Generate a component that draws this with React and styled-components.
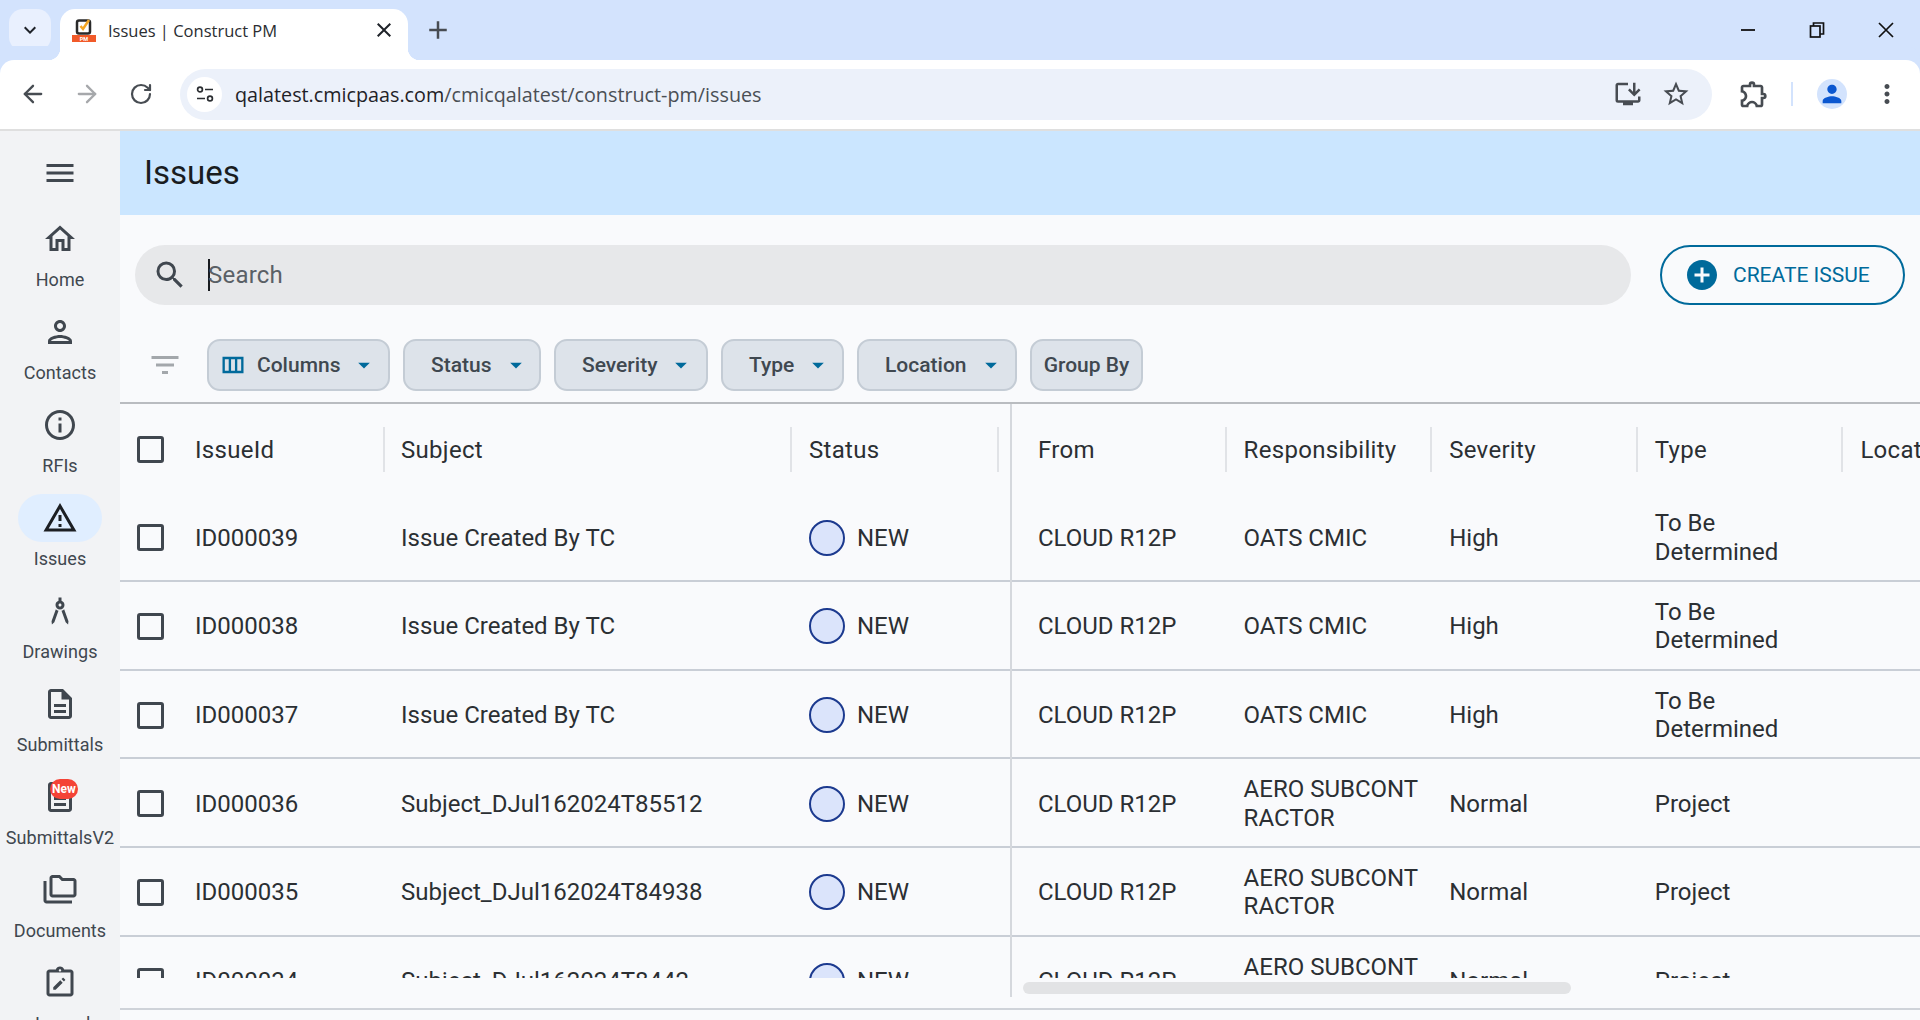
import React from "react"
import styled, { createGlobalStyle } from "styled-components"
import { ArrowLeft, ArrowRight, RotateCw } from "lucide-react"
import {
    MdAdd, MdAddCircle, MdArrowDropDown, MdClose, MdFilterList,
    MdInfoOutline, MdKeyboardArrowDown, MdMenu, MdMoreVert, MdOutlineArchitecture,
    MdOutlineDescription, MdOutlineExtension, MdOutlineFolderCopy, MdOutlineHome,
    MdOutlineInstallDesktop, MdOutlinePerson, MdOutlineViewColumn, MdOutlineWarningAmber,
    MdPerson, MdSearch, MdStarBorder,
} from "react-icons/md"

const GlobalStyle = createGlobalStyle`
    html, body {
        margin: 0;
        height: 100%;
        overflow: hidden;
        background: #f9fafc;
    }
    * { box-sizing: border-box; }
`

const Page = styled.div`
    width: 1920px;
    height: 1020px;
    display: flex;
    flex-direction: column;
    overflow: hidden;
    font-family: Roboto, "Liberation Sans", sans-serif;
`

/* browser chrome */

const TabStrip = styled.div`
    height: 60px;
    flex-shrink: 0;
    background: #d3e3fd;
    display: flex;
    align-items: flex-end;
    padding-left: 9px;
`

const TabSearch = styled.div`
    width: 42px;
    height: 42px;
    margin-bottom: 9px;
    border-radius: 14px;
    background: #e9f0fe;
    display: flex;
    align-items: center;
    justify-content: center;
    font-size: 24px;
    color: #1f2329;
`

const Tab = styled.div`
    position: relative;
    width: 348px;
    height: 51px;
    margin-left: 9px;
    padding: 0 12px 9px 12px;
    background: #fff;
    border-radius: 15px 15px 0 0;
    display: flex;
    align-items: center;
    &::before, &::after {
        content: "";
        position: absolute;
        bottom: 0;
        width: 12px;
        height: 12px;
    }
    &::before {
        left: -12px;
        background: radial-gradient(circle at 0 0, #d3e3fd 12px, #fff 12.5px);
    }
    &::after {
        right: -12px;
        background: radial-gradient(circle at 100% 0, #d3e3fd 12px, #fff 12.5px);
    }
`

const TabTitle = styled.span`
    margin-left: 12px;
    flex: 1;
    font-family: "Open Sans", "Noto Sans", sans-serif;
    font-size: 16.5px;
    color: #2a2d31;
`

const TabClose = styled.span`
    display: flex;
    font-size: 24px;
    color: #1f2329;
`

const NewTab = styled.div`
    margin: 0 0 15px 15px;
    display: flex;
    font-size: 30px;
    color: #474c52;
`

const WindowControls = styled.div`
    margin-left: auto;
    align-self: flex-start;
    display: flex;
`

const WindowButton = styled.div`
    width: 69px;
    height: 60px;
    display: flex;
    align-items: center;
    justify-content: center;
    color: #111;
`

const Toolbar = styled.div`
    height: 71px;
    flex-shrink: 0;
    background: #fff;
    border-bottom: 2px solid #dfdfdf;
    border-radius: 14px 14px 0 0;
    box-shadow: 0 -14px 0 0 #d3e3fd;
    display: flex;
    align-items: center;
    padding: 0 0 1px 11px;
`

const NavButton = styled.div`
    width: 44px;
    height: 44px;
    margin-right: 10px;
    display: flex;
    align-items: center;
    justify-content: center;
    color: ${props => props.dim ? "#a6a8ab" : "#474c52"};
`

const Omnibox = styled.div`
    width: 1532px;
    height: 51px;
    margin-left: 7px;
    padding: 0 12px 0 7px;
    border-radius: 26px;
    background: #ecf1fa;
    display: flex;
    align-items: center;
`

const SiteInfo = styled.div`
    width: 35px;
    height: 35px;
    border-radius: 50%;
    background: #fff;
    display: flex;
    align-items: center;
    justify-content: center;
`

const Url = styled.div`
    margin-left: 13px;
    flex: 1;
    font-family: "Open Sans", "Noto Sans", sans-serif;
    font-size: 19.75px;
    color: #1f2227;
    span { color: #4a4f55; }
`

const OmniIcon = styled.div`
    width: 48px;
    display: flex;
    justify-content: center;
    font-size: 30px;
    color: #474c52;
`

const ToolbarEnd = styled.div`
    flex: 1;
    display: flex;
    align-items: center;
    padding-left: 16px;
    font-size: 30px;
    color: #474c52;
`

const ExtensionButton = styled.div`
    width: 44px;
    margin-left: 4px;
    display: flex;
    justify-content: center;
    font-size: 32px;
    color: #474c52;
`

const ToolbarSeparator = styled.div`
    width: 2px;
    height: 24px;
    margin: 0 24px 0 15px;
    background: #d3e3fd;
`

const Avatar = styled.div`
    width: 30px;
    height: 30px;
    border-radius: 50%;
    background: #d3e3fd;
    color: #0b57d0;
    font-size: 28px;
    display: flex;
    align-items: center;
    justify-content: center;
    overflow: hidden;
`

const ToolbarMore = styled.div`
    margin-left: 25px;
    display: flex;
`

/* app shell */

const Body = styled.div`
    flex: 1;
    min-height: 0;
    display: flex;
`

const Sidebar = styled.nav`
    width: 120px;
    flex-shrink: 0;
    background: #f2f3f5;
    display: flex;
    flex-direction: column;
    align-items: center;
    overflow: hidden;
`

const MenuButton = styled.div`
    height: 84px;
    flex-shrink: 0;
    display: flex;
    align-items: center;
    font-size: 36px;
    color: #40474f;
`

const NavItem = styled.div`
    width: 120px;
    height: 93px;
    flex-shrink: 0;
    display: flex;
    flex-direction: column;
    align-items: center;
`

const NavPill = styled.div`
    position: relative;
    width: 84px;
    height: 48px;
    flex-shrink: 0;
    border-radius: 24px;
    background: ${props => props.active ? "#e0eeff" : "transparent"};
    color: ${props => props.active ? "#1c1f23" : "#40474f"};
    font-size: 36px;
    display: flex;
    align-items: center;
    justify-content: center;
`

const NavLabel = styled.div`
    padding-top: 2px;
    line-height: 30px;
    font-size: 18px;
    letter-spacing: 0.05px;
    color: #40474f;
    white-space: nowrap;
`

const NewBadge = styled.span`
    position: absolute;
    left: 32px;
    top: 6px;
    width: 28px;
    height: 20px;
    border-radius: 10px;
    background: #f44336;
    color: #fff;
    font-size: 12px;
    font-weight: 700;
    line-height: 20px;
    text-align: center;
`

const Main = styled.main`
    flex: 1;
    min-width: 0;
    display: flex;
    flex-direction: column;
    background: #f9fafc;
`

const Header = styled.header`
    height: 84px;
    flex-shrink: 0;
    background: #cbe6ff;
    display: flex;
    align-items: center;
    padding: 0 0 2px 24px;
`

const Title = styled.h1`
    margin: 0;
    font-size: 33px;
    font-weight: 400;
    color: #191c20;
`

const SearchRow = styled.div`
    height: 124px;
    flex-shrink: 0;
    padding: 30px 15px 0 15px;
    display: flex;
    gap: 29px;
`

const SearchField = styled.div`
    flex: 1;
    height: 60px;
    border-radius: 30px;
    background: #e7e8ea;
    display: flex;
    align-items: center;
    padding-left: 17px;
    font-size: 36px;
    color: #40474f;
`

const SearchText = styled.div`
    margin-left: 20px;
    border-left: 2px solid #191c20;
    height: 32px;
    line-height: 32px;
    font-size: 24px;
    letter-spacing: 0.2px;
    text-indent: -2px;
    color: #5a6066;
`

const CreateButton = styled.div`
    width: 245px;
    height: 60px;
    flex-shrink: 0;
    border: 2px solid #006a9b;
    border-radius: 30px;
    display: flex;
    align-items: center;
    padding-left: 22px;
    color: #006a9b;
    font-size: 21px;
    font-weight: 400;
`

const CreateIcon = styled.span`
    display: flex;
    font-size: 36px;
    margin-right: 13px;
`

const FilterRow = styled.div`
    height: 65px;
    flex-shrink: 0;
    border-bottom: 2px solid #b9bcc0;
    padding-left: 16px;
    display: flex;
    align-items: flex-start;
    gap: 13px;
`

const FilterIcon = styled.div`
    width: 58px;
    height: 52px;
    padding-left: 11px;
    display: flex;
    align-items: center;
    font-size: 36px;
    color: #a3a7ab;
`

const Chip = styled.div`
    height: 52px;
    width: ${props => props.w}px;
    padding-left: ${props => props.pad || 0}px;
    border: 2px solid #c4ccd5;
    border-radius: 13px;
    background: #dde3ea;
    display: flex;
    align-items: center;
    justify-content: ${props => props.center ? "center" : "flex-start"};
    font-size: 21px;
    font-weight: 500;
    color: #3f4850;
    white-space: nowrap;
`

const ChipIcon = styled.span`
    display: flex;
    font-size: 28px;
    color: #006a9b;
    margin: ${props => props.gap};
`

const TableArea = styled.div`
    position: relative;
    height: 606px;
    flex-shrink: 0;
    border-bottom: 2px solid #cfd3d9;
`

const Viewport = styled.div`
    height: 574px;
    overflow: hidden;
`

const Row = styled.div`
    display: flex;
    height: ${props => props.head ? "89.5px" : "88.67px"};
    padding-top: 2px;
    border-bottom: ${props => props.head ? "none" : "2px solid #c9ced6"};
`

const Frozen = styled.div`
    width: 891px;
    flex-shrink: 0;
    display: grid;
    grid-template-columns: 60px 205px 407px 207px;
`

const Rest = styled.div`
    padding-left: 10px;
    display: grid;
    grid-template-columns: repeat(5, 205.6px);
`

const Cell = styled.div`
    position: relative;
    padding: 0 8px 0 ${props => props.pad || 17}px;
    display: flex;
    align-items: center;
    font-size: 24px;
    line-height: 28.5px;
    letter-spacing: ${props => props.head ? "0.3px" : "0"};
    color: #2b2f33;
    white-space: pre-line;
    overflow: ${props => props.head ? "visible" : "hidden"};
    &::after {
        content: ${props => props.divided ? '""' : "none"};
        position: absolute;
        right: 0;
        top: 21px;
        height: 45px;
        width: 2px;
        background: #e1e3e7;
    }
`

const CheckCell = styled.div`
    display: flex;
    align-items: center;
    padding-left: 17px;
`

const Checkbox = styled.div`
    width: 27px;
    height: 27px;
    border: 3px solid #40474f;
    border-radius: 3px;
`

const StatusDot = styled.span`
    width: 36px;
    height: 36px;
    flex-shrink: 0;
    border: 2.5px solid #1c3a8f;
    border-radius: 50%;
    background: #dbe4fb;
    margin-right: 12px;
`

const FrozenEdge = styled.div`
    position: absolute;
    left: 890px;
    top: 0;
    height: 593px;
    width: 2px;
    background: #d5d8dd;
`

const ScrollThumb = styled.div`
    position: absolute;
    left: 903px;
    top: 578px;
    width: 548px;
    height: 12px;
    border-radius: 6px;
    background: #e2e3e5;
`

const issues = [
    ["ID000039", "Issue Created By TC", "OATS CMIC", "High", "To Be\nDetermined"],
    ["ID000038", "Issue Created By TC", "OATS CMIC", "High", "To Be\nDetermined"],
    ["ID000037", "Issue Created By TC", "OATS CMIC", "High", "To Be\nDetermined"],
    ["ID000036", "Subject_DJul162024T85512", "AERO SUBCONT\nRACTOR", "Normal", "Project"],
    ["ID000035", "Subject_DJul162024T84938", "AERO SUBCONT\nRACTOR", "Normal", "Project"],
    ["ID000034", "Subject_DJul162024T8442", "AERO SUBCONT\nRACTOR", "Normal", "Project"],
]

const JournalIcon = () => (
    <svg width="36" height="36" viewBox="0 0 24 24" fill="currentColor">
        <path d="M19 3h-4.2C14.4 1.8 13.3 1 12 1s-2.4.8-2.8 2H5c-1.1 0-2 .9-2 2v14c0 1.1.9 2 2 2h14c1.1 0 2-.9 2-2V5c0-1.1-.9-2-2-2zm-7-.2c.4 0 .8.4.8.8s-.4.8-.8.8-.8-.4-.8-.8.4-.8.8-.8zM19 19H5V5h14v14z" />
        <path d="M7.500 14.900V16.500h1.600l4.700-4.700-1.600-1.600-4.700 4.700zM15.400 10.200c.2-.2.2-.4 0-.6l-1-1c-.2-.2-.4-.2-.6 0l-.8.8 1.600 1.600.8-.8z" />
    </svg>
)

const navItems = [
    { label: "Home", icon: <MdOutlineHome /> },
    { label: "Contacts", icon: <MdOutlinePerson /> },
    { label: "RFIs", icon: <MdInfoOutline /> },
    { label: "Issues", icon: <MdOutlineWarningAmber />, active: true },
    { label: "Drawings", icon: <MdOutlineArchitecture /> },
    { label: "Submittals", icon: <MdOutlineDescription /> },
    { label: "SubmittalsV2", icon: <MdOutlineDescription />, isNew: true },
    { label: "Documents", icon: <MdOutlineFolderCopy /> },
    { label: "Journal", icon: <JournalIcon /> },
]

const filters = [
    { label: "Status", w: 138 },
    { label: "Severity", w: 154 },
    { label: "Type", w: 123 },
    { label: "Location", w: 160 },
]

const Favicon = () => (
    <svg width="24" height="24" viewBox="0 0 24 24">
        <rect x="5" y="2.500" width="13" height="13" rx="2" fill="none" stroke="#2a2a2a" strokeWidth="2.500" />
        <path d="M8.500 8l2.500 3 6-9" fill="none" stroke="#f5a623" strokeWidth="2.500" />
        <rect x="0" y="17" width="24" height="7" fill="#f15a29" />
        <text x="12" y="23" textAnchor="middle" fontSize="5.500" fontWeight="700" fill="#fff" fontFamily="Roboto, sans-serif">PM</text>
    </svg>
)

const SiteInfoIcon = () => (
    <svg width="20" height="20" viewBox="0 0 20 20" fill="none" stroke="#2a2d31" strokeWidth="1.700">
        <circle cx="5" cy="5.500" r="2.400" />
        <path d="M10 5.500h8M2 14.500h8" />
        <circle cx="15" cy="14.500" r="2.400" />
    </svg>
)

const RestoreIcon = () => (
    <svg width="16" height="16" viewBox="0 0 16 16" fill="none" stroke="#111" strokeWidth="1.700">
        <rect x="1.500" y="4" width="9.500" height="11" />
        <path d="M4.500 4V1h10v11H11" />
    </svg>
)

const MinimizeIcon = () => (
    <svg width="16" height="16" viewBox="0 0 16 16" stroke="#111" strokeWidth="1.800">
        <path d="M1 8h14" />
    </svg>
)

const CloseIcon = () => (
    <svg width="18" height="18" viewBox="0 0 18 18" stroke="#111" strokeWidth="1.700">
        <path d="M2 2l14 14M16 2L2 16" />
    </svg>
)

const BrowserChrome = () => (
    <>
        <TabStrip>
            <TabSearch><MdKeyboardArrowDown /></TabSearch>
            <Tab>
                <Favicon />
                <TabTitle>Issues | Construct PM</TabTitle>
                <TabClose><MdClose /></TabClose>
            </Tab>
            <NewTab><MdAdd /></NewTab>
            <WindowControls>
                <WindowButton><MinimizeIcon /></WindowButton>
                <WindowButton><RestoreIcon /></WindowButton>
                <WindowButton><CloseIcon /></WindowButton>
            </WindowControls>
        </TabStrip>
        <Toolbar>
            <NavButton><ArrowLeft size={28} strokeWidth={2} /></NavButton>
            <NavButton dim><ArrowRight size={28} strokeWidth={2} /></NavButton>
            <NavButton><RotateCw size={24} strokeWidth={2.2} /></NavButton>
            <Omnibox>
                <SiteInfo><SiteInfoIcon /></SiteInfo>
                <Url>qalatest.cmicpaas.com<span>/cmicqalatest/construct-pm/issues</span></Url>
                <OmniIcon><MdOutlineInstallDesktop /></OmniIcon>
                <OmniIcon><MdStarBorder /></OmniIcon>
            </Omnibox>
            <ToolbarEnd>
                <ExtensionButton><MdOutlineExtension /></ExtensionButton>
                <ToolbarSeparator />
                <Avatar><MdPerson /></Avatar>
                <ToolbarMore><MdMoreVert /></ToolbarMore>
            </ToolbarEnd>
        </Toolbar>
    </>
)

const Nav = () => (
    <Sidebar>
        <MenuButton><MdMenu /></MenuButton>
        {navItems.map(item => (
            <NavItem key={item.label}>
                <NavPill active={item.active}>
                    {item.icon}
                    {item.isNew && <NewBadge>New</NewBadge>}
                </NavPill>
                <NavLabel>{item.label}</NavLabel>
            </NavItem>
        ))}
    </Sidebar>
)

const IssuesTable = () => (
    <TableArea>
        <Viewport>
            <Row head>
                <Frozen>
                    <CheckCell><Checkbox /></CheckCell>
                    <Cell head pad={15} divided>IssueId</Cell>
                    <Cell head pad={16} divided>Subject</Cell>
                    <Cell head divided>Status</Cell>
                </Frozen>
                <Rest>
                    <Cell head divided>From</Cell>
                    <Cell head divided>Responsibility</Cell>
                    <Cell head divided>Severity</Cell>
                    <Cell head divided>Type</Cell>
                    <Cell head>Location</Cell>
                </Rest>
            </Row>
            {issues.map(([id, subject, responsibility, severity, type]) => (
                <Row key={id}>
                    <Frozen>
                        <CheckCell><Checkbox /></CheckCell>
                        <Cell pad={15}>{id}</Cell>
                        <Cell pad={16}>{subject}</Cell>
                        <Cell><StatusDot />NEW</Cell>
                    </Frozen>
                    <Rest>
                        <Cell>CLOUD R12P</Cell>
                        <Cell>{responsibility}</Cell>
                        <Cell>{severity}</Cell>
                        <Cell>{type}</Cell>
                        <Cell />
                    </Rest>
                </Row>
            ))}
        </Viewport>
        <FrozenEdge />
        <ScrollThumb />
    </TableArea>
)

export default function App() {
    return (
        <Page>
            <GlobalStyle />
            <BrowserChrome />
            <Body>
                <Nav />
                <Main>
                    <Header><Title>Issues</Title></Header>
                    <SearchRow>
                        <SearchField>
                            <MdSearch />
                            <SearchText>Search</SearchText>
                        </SearchField>
                        <CreateButton>
                            <CreateIcon><MdAddCircle /></CreateIcon>
                            CREATE ISSUE
                        </CreateButton>
                    </SearchRow>
                    <FilterRow>
                        <FilterIcon><MdFilterList /></FilterIcon>
                        <Chip w={183} pad={10}>
                            <ChipIcon gap="0 10px 0 0"><MdOutlineViewColumn /></ChipIcon>
                            Columns
                            <ChipIcon gap="0 0 0 10px"><MdArrowDropDown /></ChipIcon>
                        </Chip>
                        {filters.map(f => (
                            <Chip key={f.label} w={f.w} pad={26}>
                                {f.label}
                                <ChipIcon gap="0 0 0 10px"><MdArrowDropDown /></ChipIcon>
                            </Chip>
                        ))}
                        <Chip w={113} center>Group By</Chip>
                    </FilterRow>
                    <IssuesTable />
                </Main>
            </Body>
        </Page>
    )
}
